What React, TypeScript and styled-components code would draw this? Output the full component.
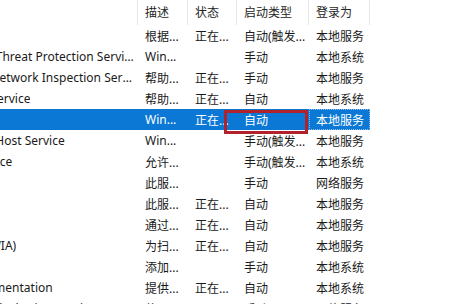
import React from "react";
import styled, { createGlobalStyle } from "styled-components";

const Global = createGlobalStyle`
  html, body { margin: 0; padding: 0; background: #ffffff; }
  body { font-family: "Noto Sans", "Noto Sans CJK SC", sans-serif; }
`;

const SCROLL = 180;
const NAME_W = 138 + SCROLL;
const COLS = `${NAME_W}px 50px 49px 72px 61px`;

const Viewport = styled.div`
  width: 455px;
  height: 304px;
  overflow: hidden;
  background: #ffffff;
  font-family: "Noto Sans", "Noto Sans CJK SC", sans-serif;
  font-size: 12px;
  color: #1a1a1a;
`;

const Table = styled.div`
  margin-left: -${SCROLL}px;
  display: flex;
  flex-direction: column;
`;

const HeaderRow = styled.div`
  display: grid;
  grid-template-columns: ${COLS};
  height: 25px;
`;

const HeaderCell = styled.div`
  display: flex;
  align-items: center;
  padding: 0 0 2px 7px;
  border-right: 1px solid #e6e6e6;
  color: #262626;
  white-space: nowrap;
  overflow: hidden;
`;

const Row = styled.div<{ $selected?: boolean }>`
  position: relative;
  z-index: ${(p) => (p.$selected ? 1 : 0)};
  display: grid;
  grid-template-columns: ${COLS};
  height: 21px;
  width: max-content;
  background: ${(p) => (p.$selected ? "#0a78d4" : "transparent")};
  color: ${(p) => (p.$selected ? "#ffffff" : "#1a1a1a")};
`;

const Cell = styled.div<{ $focus?: boolean; $open?: boolean }>`
  position: relative;
  display: flex;
  align-items: center;
  padding-left: 7px;
  padding-right: 2px;
  white-space: nowrap;
  overflow: ${(p) => (p.$open ? "visible" : "hidden")};
  ${(p) => (p.$focus ? "outline: 1px dotted rgba(255,255,255,0.55); outline-offset: -1px;" : "")}
`;

const NameText = styled.span`
  display: block;
  overflow: hidden;
  text-overflow: ellipsis;
  white-space: nowrap;
  min-width: 0;
`;

const Highlight = styled.div`
  position: absolute;
  left: -13px;
  top: 1px;
  width: 84px;
  height: 24px;
  box-sizing: border-box;
  border: 3px solid #b0222c;
  z-index: 2;
  pointer-events: none;
`;

type Svc = {
  name: string;
  desc: string;
  status: string;
  start: string;
  logon: string;
  selected?: boolean;
};

const services: Svc[] = [
  { name: "Windows Connection Manager", desc: "根据...", status: "正在...", start: "自动(触发...", logon: "本地服务" },
  { name: "Windows Defender Advanced Threat Protection Service", desc: "Win...", status: "", start: "手动", logon: "本地系统" },
  { name: "Windows Defender Antivirus Network Inspection Service", desc: "帮助...", status: "正在...", start: "手动", logon: "本地服务" },
  { name: "Windows Defender Antivirus Service", desc: "帮助...", status: "正在...", start: "自动", logon: "本地系统" },
  { name: "Windows Defender Firewall", desc: "Win...", status: "正在...", start: "自动", logon: "本地服务", selected: true },
  { name: "Windows Encryption Provider Host Service", desc: "Win...", status: "", start: "手动(触发...", logon: "本地服务" },
  { name: "Windows Error Reporting Service", desc: "允许...", status: "", start: "手动(触发...", logon: "本地系统" },
  { name: "Windows Event Collector", desc: "此服...", status: "", start: "手动", logon: "网络服务" },
  { name: "Windows Event Log", desc: "此服...", status: "正在...", start: "自动", logon: "本地服务" },
  { name: "Windows Font Cache Service", desc: "通过...", status: "正在...", start: "自动", logon: "本地服务" },
  { name: "Windows Image Acquisition (WIA)", desc: "为扫...", status: "正在...", start: "自动", logon: "本地服务" },
  { name: "Windows Insider Service", desc: "添加...", status: "", start: "手动", logon: "本地系统" },
  { name: "Windows Management Instrumentation", desc: "提供...", status: "正在...", start: "自动", logon: "本地系统" },
  { name: "Windows Media Player Network Sharing Service", desc: "使用...", status: "", start: "手动", logon: "网络服务" },
];

export default function App() {
  return (
    <>
      <Global />
      <Viewport>
        <Table>
          <HeaderRow>
            <HeaderCell>名称</HeaderCell>
            <HeaderCell>描述</HeaderCell>
            <HeaderCell>状态</HeaderCell>
            <HeaderCell>启动类型</HeaderCell>
            <HeaderCell>登录为</HeaderCell>
          </HeaderRow>
          {services.map((s) => (
            <Row key={s.name} $selected={s.selected}>
              <Cell>
                <NameText>{s.name}</NameText>
              </Cell>
              <Cell>{s.desc}</Cell>
              <Cell>{s.status}</Cell>
              <Cell $open={s.selected}>
                {s.start}
                {s.selected && <Highlight />}
              </Cell>
              <Cell $focus={s.selected}>{s.logon}</Cell>
            </Row>
          ))}
        </Table>
      </Viewport>
    </>
  );
}
